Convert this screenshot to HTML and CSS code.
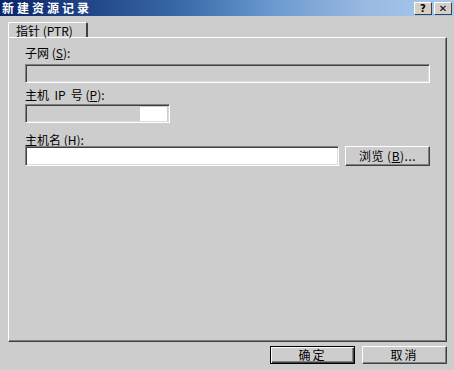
FILE: index.html
```html
<!DOCTYPE html>
<html lang="zh-CN">
<head>
<meta charset="utf-8">
<title>新建资源记录</title>
<link rel="stylesheet" href="styles.css">
</head>
<body>
<div class="dialog">
  <div class="titlebar">
    <span class="title">新建资源记录</span>
    <div class="tbtns">
      <span class="tbtn">?</span>
      <span class="tbtn x">✕</span>
    </div>
  </div>
  <div class="tabs">
    <div class="tab">指针 (PTR)</div>
  </div>
  <div class="panel">
    <div class="label l1">子网 (<u>S</u>):</div>
    <div class="field gray wide"></div>
    <div class="label l2">主机&nbsp; IP &nbsp;号 (<u>P</u>):</div>
    <div class="field ip"><span class="ipgray"></span><span class="ipwhite"></span></div>
    <div class="label l3">主机名 (<u>H</u>):</div>
    <div class="row">
      <div class="field white host"></div>
      <div class="btn browse">浏览 (<u>B</u>)...</div>
    </div>
  </div>
  <div class="footer">
    <div class="btn default">确定</div>
    <div class="btn">取消</div>
  </div>
</div>
</body>
</html>
```

FILE: styles.css
```css
html, body {
  margin: 0;
  padding: 0;
  background: #cdcdcd;
}
.dialog {
  width: 454px;
  height: 370px;
  background: #cdcdcd;
  font-family: "Noto Sans CJK SC", "Liberation Sans", sans-serif;
  font-size: 12px;
  color: #000;
  display: flex;
  flex-direction: column;
  overflow: hidden;
}
.titlebar {
  height: 16px;
  flex: none;
  background: linear-gradient(to right, #0a246a 0%, #3a6aa8 40%, #6a9ad0 60%, #9ab8e0 80%, #a6caf0 100%);
  display: flex;
  align-items: center;
  justify-content: space-between;
}
.title {
  color: #fff;
  font-weight: bold;
  font-size: 12px;
  letter-spacing: 3px;
  padding-left: 2px;
  line-height: 14px;
  height: 14px;
}
.tbtns {
  display: flex;
  gap: 2px;
  padding-right: 2px;
}
.tbtn {
  width: 16px;
  height: 11px;
  background: #d4d0c8;
  border-top: 1px solid #fff;
  border-left: 1px solid #fff;
  border-right: 1px solid #404040;
  border-bottom: 1px solid #404040;
  font-family: "DejaVu Sans", sans-serif;
  font-weight: bold;
  font-size: 10px;
  line-height: 11px;
  text-align: center;
  color: #000;
}
.tabs {
  display: flex;
  padding-left: 8px;
  margin-top: 6px;
  height: 15px;
}
.tab {
  height: 15px;
  border-top: 1px solid #fff;
  border-left: 1px solid #fff;
  border-right: 2px solid #404040;
  border-radius: 2px 2px 0 0;
  padding-left: 7px;
  line-height: 15px;
  box-sizing: border-box;
  width: 80px;
  font-size: 12px;
  position: relative;
  z-index: 1;
  background: #cdcdcd;
  margin-bottom: -1px;
}
.panel {
  margin-left: 8px;
  width: 439px;
  height: 305px;
  box-sizing: border-box;
  border-top: 1px solid #fff;
  border-left: 1px solid #fff;
  border-right: 1px solid #404040;
  border-bottom: 1px solid #404040;
  box-shadow: inset -1px -1px 0 #808080;
  padding: 9px 0 0 16px;
  display: flex;
  flex-direction: column;
  align-items: flex-start;
}
.label {
  line-height: 12px;
  height: 12px;
  font-size: 12px;
  white-space: pre;
}
.l1 { margin-bottom: 5px; }
.l2 { margin-top: 6px; margin-bottom: 3px; }
.l3 { margin-top: 11px; margin-bottom: 0; }
.field {
  box-sizing: border-box;
  height: 19px;
  border-top: 1px solid #808080;
  border-left: 1px solid #808080;
  border-right: 1px solid #fff;
  border-bottom: 1px solid #fff;
  box-shadow: inset 1px 1px 0 #404040, inset -1px -1px 0 #dcdcdc;
}
.gray { background: #cdcdcd; }
.white { background: #fff; }
.wide { width: 405px; }
.ip {
  width: 145px;
  display: flex;
  padding: 2px 2px 1px 2px;
}
.ipgray { flex: 1; }
.ipwhite { width: 27px; background: #fff; }
.row {
  display: flex;
  align-items: flex-start;
  gap: 6px;
}
.host {
  width: 314px;
  height: 20px;
}
.btn {
  box-sizing: border-box;
  width: 85px;
  height: 19px;
  background: #cdcdcd;
  border-top: 1px solid #fff;
  border-left: 1px solid #fff;
  border-right: 1px solid #404040;
  border-bottom: 1px solid #404040;
  box-shadow: inset -1px -1px 0 #808080;
  text-align: center;
  line-height: 17px;
  font-size: 12px;
}
.browse {
  height: 20px;
  letter-spacing: 0.5px;
}
.footer {
  display: flex;
  justify-content: flex-end;
  gap: 7px;
  padding: 4px 7px 0 0;
}
.default {
  border: 1px solid #000;
  box-shadow: inset 1px 1px 0 #fff, inset -1px -1px 0 #404040, inset -2px -2px 0 #808080;
  letter-spacing: 2px;
}
.footer .btn { height: 18px; line-height: 16px; letter-spacing: 2px; }
```
